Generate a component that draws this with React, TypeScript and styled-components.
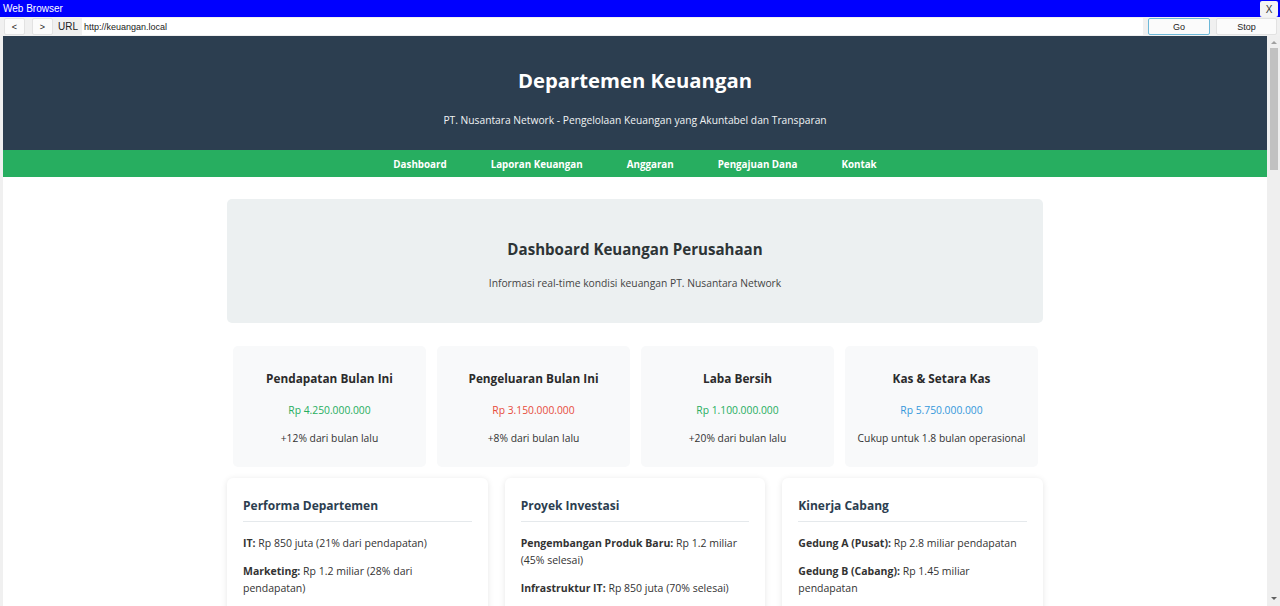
import React from "react";
import styled, { createGlobalStyle } from "styled-components";

const GlobalStyle = createGlobalStyle`
  html, body { margin: 0; padding: 0; }
  body {
    background: #f0f0f0;
    overflow: hidden;
    font-family: "Open Sans", "Noto Sans", sans-serif;
  }
  * { box-sizing: border-box; }
`;

const Window = styled.div`
  width: 1280px;
  height: 606px;
  display: flex;
  flex-direction: column;
  background: #f0f0f0;
  overflow: hidden;
`;

const TitleBar = styled.div`
  height: 17px;
  background: #0000ff;
  color: #ffffff;
  font-family: "Liberation Sans", Arial, sans-serif;
  font-size: 10px;
  display: flex;
  align-items: center;
  justify-content: space-between;
  padding-left: 3px;
  padding-right: 2px;
`;

const CloseButton = styled.div`
  width: 18px;
  height: 16px;
  background: #f4f4f4;
  color: #333;
  border-radius: 2px;
  font-size: 10px;
  display: flex;
  align-items: center;
  justify-content: center;
  margin-top: 1px;
`;

const Toolbar = styled.div`
  height: 19px;
  display: flex;
  align-items: center;
  padding: 0 3px 0 4px;
  font-family: "Liberation Sans", Arial, sans-serif;
  font-size: 9px;
  color: #222;
`;

const ToolButton = styled.div<{ $w: number; $focus?: boolean; $ml?: number }>`
  width: ${(p) => p.$w}px;
  height: 17px;
  margin-left: ${(p) => p.$ml ?? 0}px;
  background: #fbfbfb;
  border: 1px solid ${(p) => (p.$focus ? "#6cb8d8" : "#e2e2e2")};
  border-radius: 2px;
  display: flex;
  align-items: center;
  justify-content: center;
`;

const UrlLabel = styled.div`
  padding: 0 4px 0 5px;
  height: 17px;
  display: flex;
  align-items: center;
  font-size: 10px;
`;

const UrlInput = styled.div`
  flex: 1;
  height: 17px;
  background: #ffffff;
  display: flex;
  align-items: center;
  padding-left: 2px;
  font-size: 9px;
`;

const Viewport = styled.div`
  flex: 1;
  display: flex;
  padding-left: 3px;
  min-height: 0;
`;

const Page = styled.div`
  flex: 1;
  background: #ffffff;
  overflow: hidden;
  color: #333;
`;

const Scrollbar = styled.div`
  width: 13px;
  background: #efefef;
  display: flex;
  flex-direction: column;
  align-items: center;
`;

const ScrollArrow = styled.div<{ $down?: boolean }>`
  width: 0;
  height: 0;
  border-left: 3px solid transparent;
  border-right: 3px solid transparent;
  ${(p) =>
    p.$down
      ? "border-top: 3px solid #606060; margin-top: auto; margin-bottom: 6px;"
      : "border-bottom: 3px solid #a0a0a0; margin-top: 5px;"}
`;

const ScrollThumb = styled.div`
  width: 8px;
  height: 122px;
  background: #c1c1c1;
  margin-top: 4px;
`;

const Header = styled.header`
  background: #2c3e50;
  color: #ffffff;
  text-align: center;
  height: 114px;
  padding-top: 31px;
`;

const SiteTitle = styled.h1`
  margin: 0;
  font-size: 20.3px;
  font-weight: 700;
  line-height: 26px;
`;

const SiteSubtitle = styled.p`
  margin: 19px 0 0;
  font-size: 10.25px;
  line-height: 16px;
  color: #f0f3f4;
`;

const Nav = styled.nav`
  background: #27ae60;
  height: 27px;
  padding-top: 2px;
  display: flex;
  justify-content: center;
  align-items: center;
`;

const NavLink = styled.a`
  color: #ffffff;
  text-decoration: none;
  font-weight: 700;
  font-size: 9.8px;
  padding: 0 22px;
`;

const Main = styled.main`
  width: 816px;
  margin: 0 auto;
  padding-top: 22px;
`;

const Hero = styled.section`
  background: #ecf0f1;
  border-radius: 5px;
  height: 124px;
  text-align: center;
  padding-top: 39px;
`;

const HeroTitle = styled.h2`
  margin: 0;
  font-size: 15.1px;
  line-height: 22px;
  color: #2d3436;
  font-weight: 700;
`;

const HeroText = styled.p`
  margin: 15px 0 0;
  font-size: 10.3px;
  line-height: 16px;
  color: #444;
`;

const StatGrid = styled.div`
  display: grid;
  grid-template-columns: repeat(4, 1fr);
  gap: 11px;
  padding: 0 5px 0 6px;
  margin-top: 23px;
`;

const StatCard = styled.div`
  background: #f8f9fa;
  border-radius: 5px;
  height: 121px;
  text-align: center;
  padding-top: 23px;
`;

const StatTitle = styled.h3`
  margin: 0;
  font-size: 11.8px;
  line-height: 18px;
  font-weight: 700;
  color: #2b2b2b;
`;

const StatValue = styled.div<{ $color: string }>`
  margin-top: 15px;
  font-size: 10.3px;
  line-height: 16px;
  color: ${(p) => p.$color};
`;

const StatNote = styled.div`
  margin-top: 12px;
  font-size: 10.3px;
  line-height: 16px;
  color: #333;
`;

const InfoGrid = styled.div`
  display: grid;
  grid-template-columns: repeat(3, 1fr);
  gap: 17px;
  margin-top: 11px;
`;

const InfoCard = styled.div`
  background: #ffffff;
  border-radius: 6px;
  box-shadow: 0 1px 6px rgba(0, 0, 0, 0.1);
  padding: 19px 16px 16px 16px;
  height: 160px;
`;

const InfoTitle = styled.h3`
  margin: 0;
  font-size: 12px;
  line-height: 18px;
  font-weight: 700;
  color: #2c3e50;
  padding-bottom: 6px;
  border-bottom: 1px solid #e5e9ec;
`;

const InfoList = styled.ul`
  list-style: none;
  margin: 0;
  padding: 13px 0 0;
`;

const InfoItem = styled.li`
  font-size: 10.5px;
  line-height: 17px;
  color: #333;
  margin-bottom: 11px;
  strong { font-weight: 700; }
`;

const stats = [
  { title: "Pendapatan Bulan Ini", value: "Rp 4.250.000.000", color: "#27ae60", note: "+12% dari bulan lalu" },
  { title: "Pengeluaran Bulan Ini", value: "Rp 3.150.000.000", color: "#e74c3c", note: "+8% dari bulan lalu" },
  { title: "Laba Bersih", value: "Rp 1.100.000.000", color: "#27ae60", note: "+20% dari bulan lalu" },
  { title: "Kas & Setara Kas", value: "Rp 5.750.000.000", color: "#3498db", note: "Cukup untuk 1.8 bulan operasional" },
];

const info = [
  {
    title: "Performa Departemen",
    items: [
      ["IT:", "Rp 850 juta (21% dari pendapatan)"],
      ["Marketing:", "Rp 1.2 miliar (28% dari pendapatan)"],
    ],
  },
  {
    title: "Proyek Investasi",
    items: [
      ["Pengembangan Produk Baru:", "Rp 1.2 miliar (45% selesai)"],
      ["Infrastruktur IT:", "Rp 850 juta (70% selesai)"],
    ],
  },
  {
    title: "Kinerja Cabang",
    items: [
      ["Gedung A (Pusat):", "Rp 2.8 miliar pendapatan"],
      ["Gedung B (Cabang):", "Rp 1.45 miliar pendapatan"],
    ],
  },
];

export default function App() {
  return (
    <>
      <GlobalStyle />
      <Window>
        <TitleBar>
          <span>Web Browser</span>
          <CloseButton>X</CloseButton>
        </TitleBar>
        <Toolbar>
          <ToolButton $w={21}>&lt;</ToolButton>
          <ToolButton $w={21} $ml={7}>&gt;</ToolButton>
          <UrlLabel>URL</UrlLabel>
          <UrlInput>http://keuangan.local</UrlInput>
          <ToolButton $w={62} $ml={5} $focus>Go</ToolButton>
          <ToolButton $w={61} $ml={6}>Stop</ToolButton>
        </Toolbar>
        <Viewport>
          <Page>
            <Header>
              <SiteTitle>Departemen Keuangan</SiteTitle>
              <SiteSubtitle>
                PT. Nusantara Network - Pengelolaan Keuangan yang Akuntabel dan Transparan
              </SiteSubtitle>
            </Header>
            <Nav>
              <NavLink href="#">Dashboard</NavLink>
              <NavLink href="#">Laporan Keuangan</NavLink>
              <NavLink href="#">Anggaran</NavLink>
              <NavLink href="#">Pengajuan Dana</NavLink>
              <NavLink href="#">Kontak</NavLink>
            </Nav>
            <Main>
              <Hero>
                <HeroTitle>Dashboard Keuangan Perusahaan</HeroTitle>
                <HeroText>Informasi real-time kondisi keuangan PT. Nusantara Network</HeroText>
              </Hero>
              <StatGrid>
                {stats.map((s) => (
                  <StatCard key={s.title}>
                    <StatTitle>{s.title}</StatTitle>
                    <StatValue $color={s.color}>{s.value}</StatValue>
                    <StatNote>{s.note}</StatNote>
                  </StatCard>
                ))}
              </StatGrid>
              <InfoGrid>
                {info.map((c) => (
                  <InfoCard key={c.title}>
                    <InfoTitle>{c.title}</InfoTitle>
                    <InfoList>
                      {c.items.map(([k, v]) => (
                        <InfoItem key={k}>
                          <strong>{k}</strong> {v}
                        </InfoItem>
                      ))}
                    </InfoList>
                  </InfoCard>
                ))}
              </InfoGrid>
            </Main>
          </Page>
          <Scrollbar>
            <ScrollArrow />
            <ScrollThumb />
            <ScrollArrow $down />
          </Scrollbar>
        </Viewport>
      </Window>
    </>
  );
}
